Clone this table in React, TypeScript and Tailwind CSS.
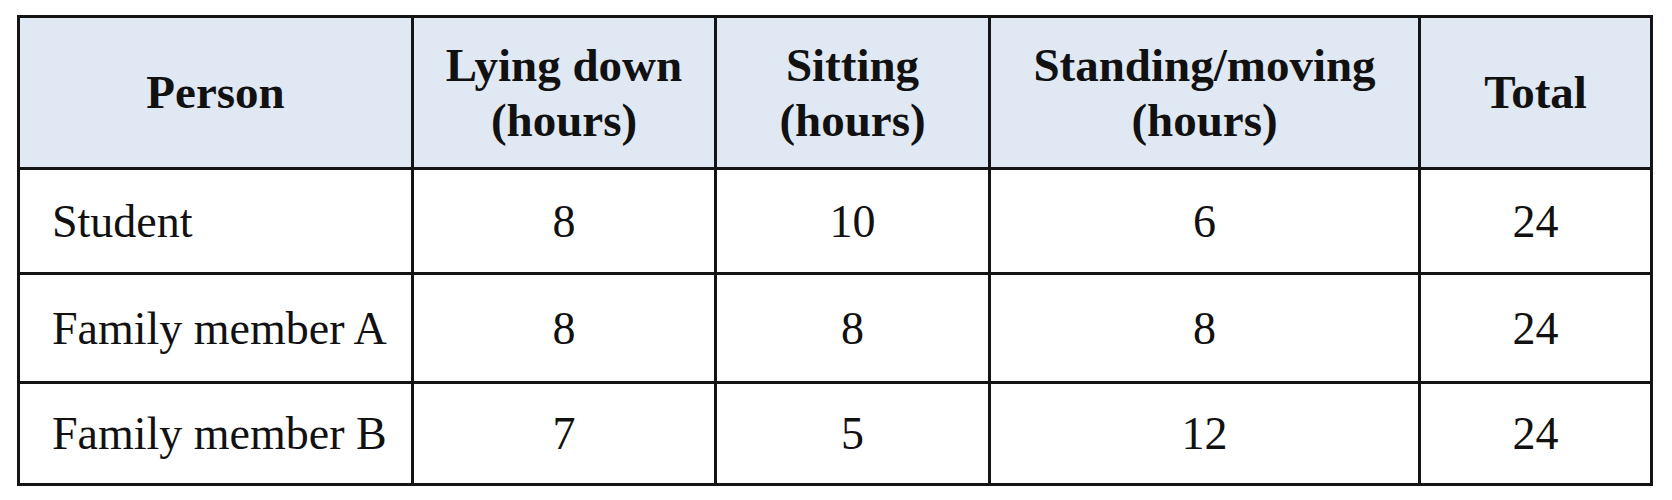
const HEADERS: string[][] = [
  ['Person'],
  ['Lying down', '(hours)'],
  ['Sitting', '(hours)'],
  ['Standing/moving', '(hours)'],
  ['Total'],
];

const ROWS: { name: string; values: number[]; h: string }[] = [
  { name: 'Student', values: [8, 10, 6, 24], h: 'h-[105px]' },
  { name: 'Family member A', values: [8, 8, 8, 24], h: 'h-[109px]' },
  { name: 'Family member B', values: [7, 5, 12, 24], h: 'h-[102px]' },
];

const cell = 'border-[3px] border-[#141414]';

export default function App() {
  return (
    <div className="min-h-[500px] bg-white pl-[17px] pt-[15px] font-['Liberation_Serif',serif] text-[#111]">
      <table className="w-[1636px] table-fixed border-collapse">
        <colgroup>
          <col className="w-[394px]" />
          <col className="w-[303px]" />
          <col className="w-[274px]" />
          <col className="w-[430px]" />
          <col className="w-[232px]" />
        </colgroup>
        <thead>
          <tr className="h-[152px] bg-[#dfe8f3]">
            {HEADERS.map((lines) => (
              <th
                key={lines[0]}
                className={`${cell} text-center align-middle text-[47px] font-bold leading-[55px]`}
              >
                {lines.map((l) => (
                  <div key={l}>{l}</div>
                ))}
              </th>
            ))}
          </tr>
        </thead>
        <tbody>
          {ROWS.map((row) => (
            <tr key={row.name} className={`${row.h} bg-white`}>
              <td className={`${cell} pl-[32px] text-left align-middle text-[46px]`}>{row.name}</td>
              {row.values.map((v, i) => (
                <td key={i} className={`${cell} text-center align-middle text-[46px]`}>
                  {v}
                </td>
              ))}
            </tr>
          ))}
        </tbody>
      </table>
    </div>
  );
}
